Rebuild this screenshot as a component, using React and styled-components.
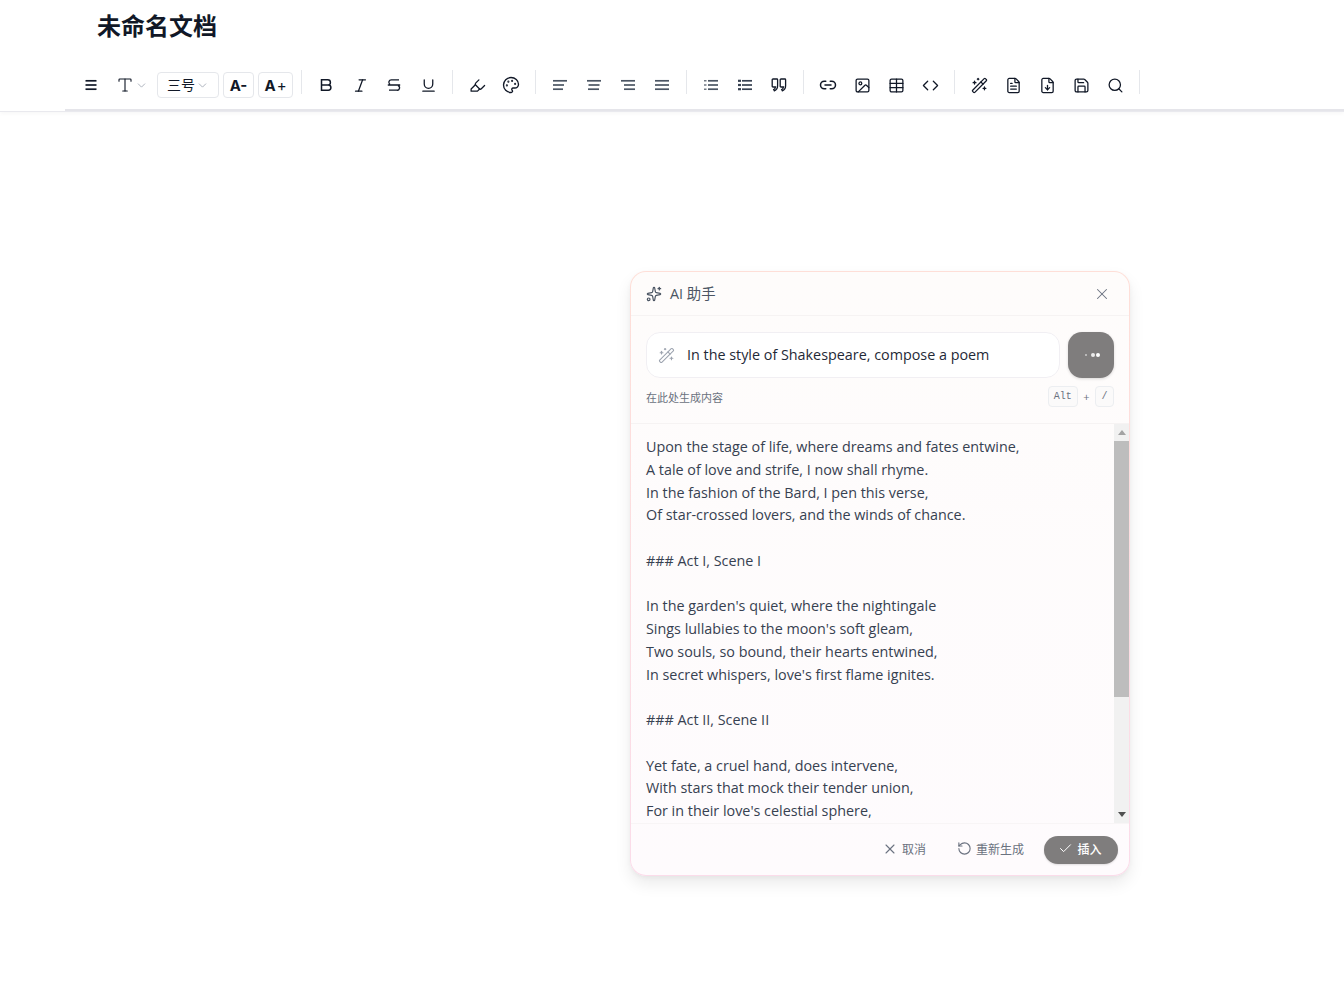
import React from "react";
import styled, { createGlobalStyle } from "styled-components";
import {
  ChevronDown, Italic, Underline, Highlighter, Palette, Link2, Image as ImageIcon,
  Table, Code, WandSparkles, FileText, FileDown, Save, Search, Sparkles, X, RotateCcw, Check, Type,
} from "lucide-react";

const GlobalStyle = createGlobalStyle`
  html, body { margin: 0; padding: 0; background: #fff; }
  body { font-family: "Open Sans", "Noto Sans CJK SC", sans-serif; }
`;

const Page = styled.div`
  width: 1344px;
  height: 1000px;
  overflow: hidden;
  position: relative;
`;

const Header = styled.header`
  height: 112px;
  box-sizing: border-box;
  border-bottom: 1px solid #e9e9ee;
  box-shadow: 0 2px 4px rgba(0, 0, 0, 0.03);
`;

const HeaderInner = styled.div`
  height: 111px;
  box-sizing: border-box;
  margin-left: 65px;
  border-bottom: 2px solid #e5e5ea;
`;

const Title = styled.h1`
  margin: 0;
  padding: 8px 0 0 32px;
  height: 70px;
  box-sizing: border-box;
  font: 700 24px/34px "Noto Sans CJK SC", sans-serif;
  color: #111827;
`;

const Toolbar = styled.div`
  display: flex;
  align-items: center;
  padding-left: 9px;
  height: 30px;
`;

const Btn = styled.button`
  width: ${(p) => p.$width || 34}px;
  height: 30px;
  flex: none;
  padding: 0 0 0 ${(p) => p.$inset || 0}px;
  border: 0;
  background: none;
  display: flex;
  align-items: center;
  justify-content: center;
  gap: ${(p) => p.$gap || 0}px;
  color: ${(p) => p.$color || "#111827"};
`;

const Divider = styled.span`
  width: 1px;
  height: 24px;
  margin: -7px 7px 0 ${(p) => p.$left || 7}px;
  background: #e5e7eb;
  flex: none;
`;

const Boxed = styled.button`
  width: ${(p) => p.$width}px;
  height: 26px;
  padding: 0;
  margin-left: ${(p) => p.$left || 0}px;
  box-sizing: border-box;
  border: 1px solid #e5e7eb;
  border-radius: 4px;
  background: #fff;
  display: flex;
  align-items: center;
  justify-content: center;
  gap: 1px;
  font: ${(p) => p.$weight || 700} ${(p) => p.$size || 15}px/1 Inter, "Noto Sans CJK SC", sans-serif;
  color: #111827;
`;

const PlusSign = styled.span`
  font-weight: 400;
`;

const Dialog = styled.section`
  position: absolute;
  left: 630px;
  top: 271px;
  width: 500px;
  height: 605px;
  box-sizing: border-box;
  border: 1px solid transparent;
  border-radius: 16px;
  background:
    linear-gradient(180deg, #fefcfb, #fefbfd) padding-box,
    linear-gradient(180deg, #fedfd8, #fbdcea) border-box;
  box-shadow: 0 8px 16px rgba(0, 0, 0, 0.08), 0 2px 4px rgba(0, 0, 0, 0.04);
  display: flex;
  flex-direction: column;
  overflow: hidden;
`;

const DialogHead = styled.div`
  height: 44px;
  flex: none;
  box-sizing: border-box;
  border-bottom: 1px solid #f6f3f3;
  padding: 0 18px 0 15px;
  display: flex;
  align-items: center;
  gap: 8px;
  font-size: 14.35px;
  color: #4b5563;
`;

const HeadTitle = styled.span`
  flex: 1;
  padding-bottom: 3px;
`;

const PromptArea = styled.div`
  height: 108px;
  flex: none;
  box-sizing: border-box;
  padding: 16px 15px 0;
  border-bottom: 1px solid #f6f3f3;
`;

const PromptRow = styled.div`
  display: flex;
  gap: 8px;
`;

const PromptInput = styled.div`
  flex: 1;
  height: 46px;
  box-sizing: border-box;
  border: 1px solid #f1eff3;
  border-radius: 14px;
  background: #fff;
  padding: 0 12px 0 11px;
  display: flex;
  align-items: center;
  gap: 12px;
  font-size: 14.35px;
  color: #1f2937;
`;

const PromptText = styled.span`
  padding-bottom: 2px;
`;

const SendBtn = styled.button`
  width: 46px;
  height: 46px;
  border: 0;
  padding: 0 0 0 2px;
  border-radius: 14px;
  background: #7f7d7d;
  box-shadow: 0 1px 3px rgba(0, 0, 0, 0.15);
  display: flex;
  align-items: center;
  justify-content: center;
  gap: 1px;
`;

const Dot = styled.i`
  display: block;
  width: ${(p) => p.$size}px;
  height: ${(p) => p.$size}px;
  margin-right: ${(p) => p.$after || 0}px;
  border-radius: 50%;
  background: #fff;
  opacity: ${(p) => p.$opacity};
`;

const HintRow = styled.div`
  margin-top: 8px;
  display: flex;
  align-items: center;
  justify-content: space-between;
  font-size: 11px;
  color: #6b7280;
`;

const Keys = styled.div`
  display: flex;
  align-items: center;
  gap: 5.5px;
  font-size: 11px;
`;

const Key = styled.kbd`
  height: 21px;
  min-width: 19px;
  padding: 0 5px;
  box-sizing: border-box;
  border: 1px solid #eceef1;
  border-radius: 4px;
  background: #fbfafa;
  display: flex;
  align-items: center;
  justify-content: center;
  font: 10px "Liberation Mono", monospace;
  color: #6b7280;
`;

const Output = styled.div`
  flex: 1;
  display: flex;
  min-height: 0;
`;

const OutputText = styled.pre`
  flex: 1;
  margin: 0;
  padding: 12px 15px;
  overflow: hidden;
  font: 400 14.35px/22.75px "Open Sans", "Noto Sans CJK SC", sans-serif;
  color: #374151;
  white-space: pre-wrap;
`;

const Scrollbar = styled.div`
  width: 15px;
  flex: none;
  background: #f1f1f1;
  display: flex;
  flex-direction: column;
  align-items: center;
`;

const ScrollArrow = styled.div`
  height: 17px;
  flex: none;
  display: flex;
  align-items: center;
  justify-content: center;
`;

const ScrollThumb = styled.div`
  width: 100%;
  height: 256px;
  background: #bdbdbd;
`;

const ScrollTrack = styled.div`
  flex: 1;
`;

const DialogFoot = styled.div`
  height: 52px;
  flex: none;
  box-sizing: border-box;
  padding: 0 11px 0 0;
  border-top: 1px solid #f8f5f6;
  display: flex;
  align-items: center;
  justify-content: flex-end;
`;

const GhostBtn = styled.button`
  height: 30px;
  border: 0;
  background: none;
  padding: 0 0 2px;
  margin-right: ${(p) => p.$right}px;
  display: flex;
  align-items: center;
  gap: 4px;
  font: 12px "Noto Sans CJK SC", sans-serif;
  color: #6b7280;
`;

const InsertBtn = styled.button`
  width: 74px;
  height: 28px;
  border: 0;
  padding: 0 2px 2px 0;
  border-radius: 14px;
  background: #7f7d7d;
  box-shadow: 0 1px 2px rgba(0, 0, 0, 0.12);
  display: flex;
  align-items: center;
  justify-content: center;
  gap: 4px;
  font: 500 12px "Noto Sans CJK SC", sans-serif;
  color: #fff;
`;

// three stacked bars: align icons, the menu icon and the lists are all this shape
const Bars = ({ rows, lead, leadWidth = 1.2, width = 1.7 }) => (
  <svg width="16" height="16" viewBox="0 0 16 16" fill="none" stroke="currentColor" strokeWidth={width}>
    {rows.map(([a, b], i) => (
      <line key={i} x1={a} x2={b} y1={3.8 + i * 4.2} y2={3.8 + i * 4.2} />
    ))}
    {lead && [0, 1, 2].map((i) => (
      <line key={i} x1={1} x2={lead} y1={3.8 + i * 4.2} y2={3.8 + i * 4.2} strokeWidth={leadWidth} />
    ))}
  </svg>
);

const BoldIcon = () => (
  <svg width="16" height="16" viewBox="0 0 16 16" fill="none" stroke="currentColor" strokeWidth="1.5">
    <path d="M3.500 2.800h6.300a2.500 2.500 0 0 1 0 5.200H3.500zM3.500 8h6.800a2.600 2.600 0 0 1 0 5.200H3.500z" />
  </svg>
);

const StrikeIcon = () => (
  <svg width="16" height="16" viewBox="0 0 16 16" fill="none" stroke="currentColor" strokeWidth="1.3">
    <path d="M13 2.800H5.500a2.500 2.500 0 0 0-1.500 4.600M1.800 8h12.400M12 8.600a2.400 2.400 0 0 1-1.300 4.600H3" />
  </svg>
);

const QuoteMark = "M2 2h3.800a.8.8 0 0 1 .8.8v6c0 2.500-1.400 4.300-3.300 5l-.6-1.200c1.100-.6 1.700-1.500 1.800-2.600H2a.8.8 0 0 1-.8-.8V2.800A.8.8 0 0 1 2 2z";

const Quote = () => (
  <svg width="16" height="16" viewBox="0 0 16 16" fill="none" stroke="currentColor" strokeWidth="1.3">
    <path d={QuoteMark} />
    <path d={QuoteMark} transform="translate(8 0)" />
  </svg>
);

const poem = `Upon the stage of life, where dreams and fates entwine,
A tale of love and strife, I now shall rhyme.
In the fashion of the Bard, I pen this verse,
Of star-crossed lovers, and the winds of chance.

### Act I, Scene I

In the garden's quiet, where the nightingale
Sings lullabies to the moon's soft gleam,
Two souls, so bound, their hearts entwined,
In secret whispers, love's first flame ignites.

### Act II, Scene II

Yet fate, a cruel hand, does intervene,
With stars that mock their tender union,
For in their love's celestial sphere,`;

const icon = { size: 17, strokeWidth: 1.8 };
const grey = "#4b5563";
const fullBars = [[5, 15], [5, 15], [5, 15]];

export default function App() {
  return (
    <Page>
      <GlobalStyle />
      <Header>
        <HeaderInner>
          <Title>未命名文档</Title>
          <Toolbar>
            <Btn><Bars rows={[[2.5, 13.5], [2.5, 13.5], [2.5, 13.5]]} /></Btn>
            <Btn $width={42} $inset={6} $gap={1}><Type size={18} strokeWidth={1.5} /><ChevronDown size={13} strokeWidth={1.5} color="#9ca3af" /></Btn>
            <Boxed $width={62} $weight={400} $size={14} $left={7}>三号<ChevronDown size={13} strokeWidth={1.5} color="#9ca3af" /></Boxed>
            <Boxed $width={31} $left={4}>A-</Boxed>
            <Boxed $width={35} $left={4}>A<PlusSign>+</PlusSign></Boxed>
            <Divider $left={8} />
            <Btn><BoldIcon /></Btn>
            <Btn><Italic {...icon} /></Btn>
            <Btn><StrikeIcon /></Btn>
            <Btn><Underline {...icon} /></Btn>
            <Divider />
            <Btn><Highlighter {...icon} /></Btn>
            <Btn><Palette size={18} strokeWidth={1.8} /></Btn>
            <Divider />
            <Btn $color={grey}><Bars rows={[[1, 15], [1, 12], [1, 11]]} /></Btn>
            <Btn $color={grey}><Bars rows={[[1, 15], [2.5, 13.5], [2, 13]]} /></Btn>
            <Btn $color={grey}><Bars rows={[[1, 15], [4, 15], [4, 15]]} /></Btn>
            <Btn $color={grey}><Bars rows={[[1, 15], [1, 15], [1, 15]]} /></Btn>
            <Divider />
            <Btn $color={grey}><Bars rows={fullBars} lead={3.5} /></Btn>
            <Btn $color="#374151"><Bars rows={fullBars} lead={4} leadWidth={2.2} /></Btn>
            <Btn><Quote /></Btn>
            <Divider />
            <Btn><Link2 size={18} strokeWidth={2} /></Btn>
            <Btn><ImageIcon {...icon} /></Btn>
            <Btn><Table {...icon} /></Btn>
            <Btn><Code {...icon} /></Btn>
            <Divider />
            <Btn><WandSparkles {...icon} /></Btn>
            <Btn><FileText {...icon} /></Btn>
            <Btn><FileDown {...icon} /></Btn>
            <Btn><Save {...icon} /></Btn>
            <Btn><Search {...icon} /></Btn>
            <Divider />
          </Toolbar>
        </HeaderInner>
      </Header>
      <Dialog>
        <DialogHead>
          <Sparkles size={16} strokeWidth={1.8} />
          <HeadTitle>AI 助手</HeadTitle>
          <X size={18} strokeWidth={1.4} color="#6b7280" />
        </DialogHead>
        <PromptArea>
          <PromptRow>
            <PromptInput>
              <WandSparkles size={17} strokeWidth={1.5} color="#9ca3af" />
              <PromptText>In the style of Shakespeare, compose a poem</PromptText>
            </PromptInput>
            <SendBtn>
              <Dot $size={2} $opacity={0.6} $after={3} />
              <Dot $size={4} $opacity={0.85} />
              <Dot $size={4} $opacity={1} />
            </SendBtn>
          </PromptRow>
          <HintRow>
            在此处生成内容
            <Keys><Key>Alt</Key>+<Key>/</Key></Keys>
          </HintRow>
        </PromptArea>
        <Output>
          <OutputText>{poem}</OutputText>
          <Scrollbar>
            <ScrollArrow>
              <svg width="8" height="5" viewBox="0 0 8 5"><path d="M4 0l4 5H0z" fill="#a3a3a3" /></svg>
            </ScrollArrow>
            <ScrollThumb />
            <ScrollTrack />
            <ScrollArrow>
              <svg width="8" height="5" viewBox="0 0 8 5"><path d="M0 0h8L4 5z" fill="#505050" /></svg>
            </ScrollArrow>
          </Scrollbar>
        </Output>
        <DialogFoot>
          <GhostBtn $right={31}><X size={16} strokeWidth={1.6} />取消</GhostBtn>
          <GhostBtn $right={20}><RotateCcw size={15} strokeWidth={1.8} />重新生成</GhostBtn>
          <InsertBtn><Check size={15} strokeWidth={1.6} />插入</InsertBtn>
        </DialogFoot>
      </Dialog>
    </Page>
  );
}
